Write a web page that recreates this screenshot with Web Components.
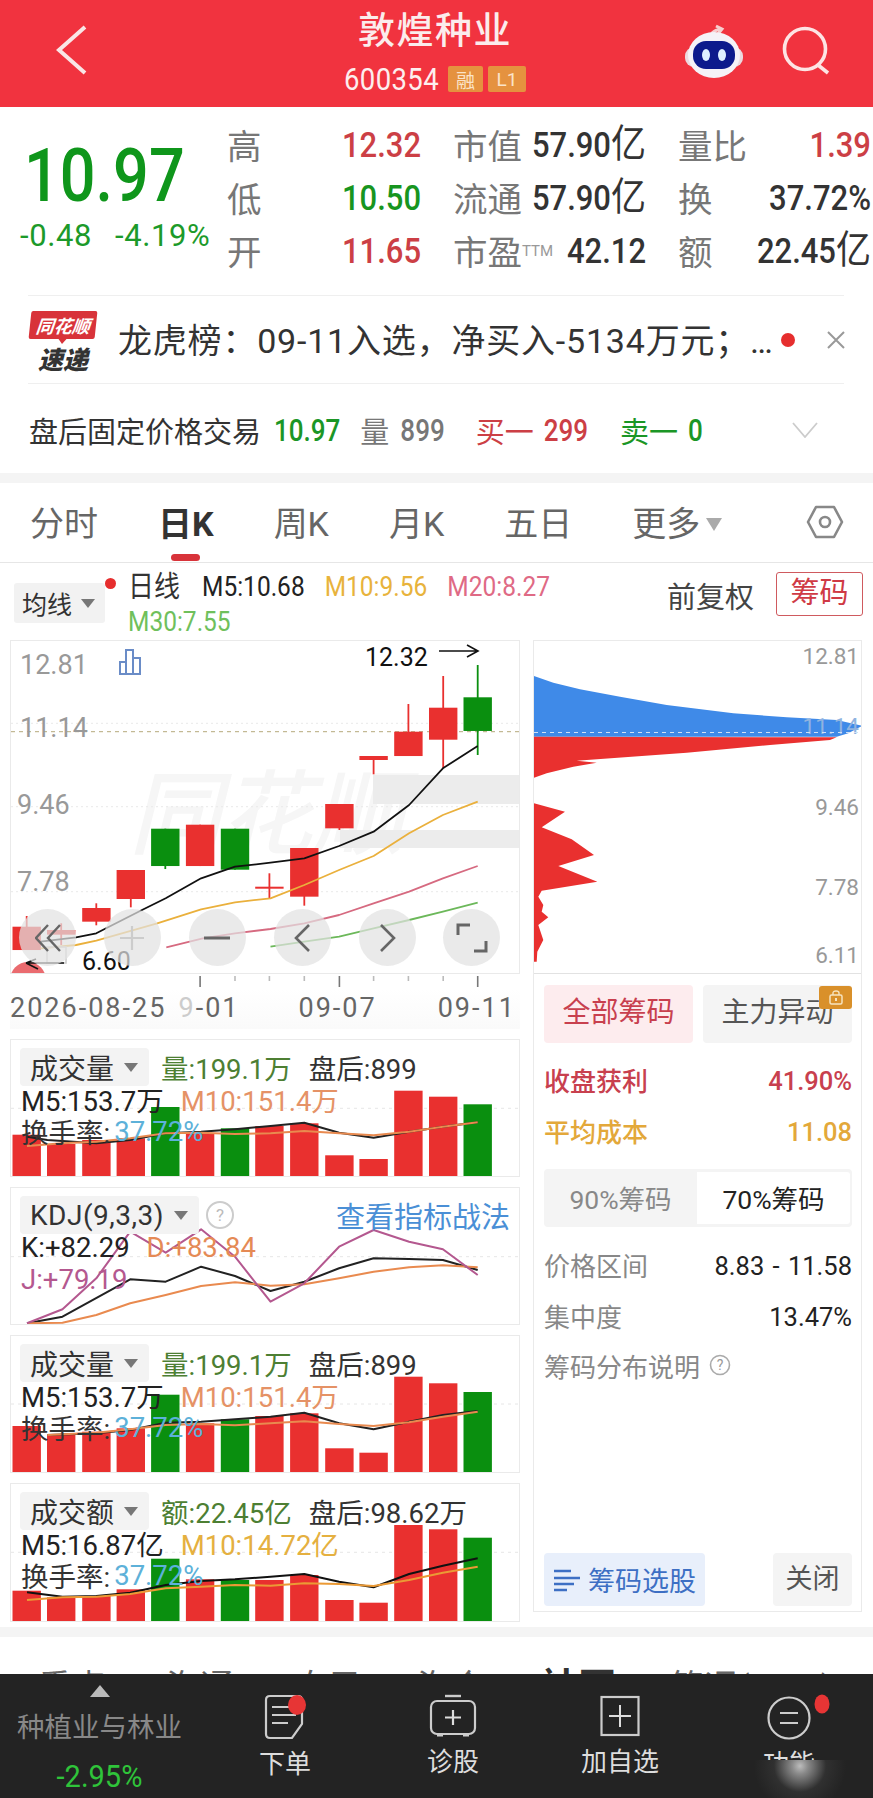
<!DOCTYPE html>
<html lang="zh">
<head>
<meta charset="utf-8">
<title>敦煌种业</title>
<style>
    html, body { margin: 0; padding: 0; background: #fff; }
    body {
        width: 873px;
        height: 1798px;
        overflow: hidden;
        color: #333;
        font-family: Roboto, "Noto Sans CJK SC", sans-serif;
    }
    .charts { display: flex; height: 987px; padding-left: 10px; box-sizing: border-box; }
    .left { width: 510px; display: flex; flex-direction: column; gap: 10px; flex: none; }
    .band { height: 10px; background: #f4f4f4; }
</style>
</head>
<body>
<stock-header></stock-header>
<quote-stats></quote-stats>
<news-row></news-row>
<after-row></after-row>
<div class="band"></div>
<period-tabs></period-tabs>
<legend-bar></legend-bar>
<div class="charts">
    <div class="left">
        <kline-chart></kline-chart>
        <chart-panel key="vol1">
            <span slot="name">成交量</span>
            <span slot="r1" style="color:#4d7f33">量:199.1万</span>
            <span slot="r1" style="color:#333">盘后:899</span>
            <span slot="r2" style="color:#222">M5:153.7万</span>
            <span slot="r2" style="color:#e59266">M10:151.4万</span>
            <span slot="r3" style="color:#333;margin-right:-14px">换手率:</span>
            <span slot="r3" style="color:#5db1d9">37.72%</span>
        </chart-panel>
        <chart-panel key="kdj">
            <span slot="name" style="letter-spacing:.5px">KDJ(9,3,3)</span>
            <svg slot="r1" width="30" height="30" viewBox="0 0 30 30" style="margin-left:-6px"><circle cx="15" cy="15" r="13" fill="none" stroke="#ccc" stroke-width="2"/><text x="15" y="21" text-anchor="middle" font-size="17" fill="#bbb">?</text></svg>
            <span slot="r1" style="color:#4a8fd6;font-size:29px;margin-left:auto;margin-right:9px">查看指标战法</span>
            <span slot="r2" style="color:#222">K:+82.29</span>
            <span slot="r2" style="color:#e58a55">D:+83.84</span>
            <span slot="r3" style="color:#b4588f">J:+79.19</span>
        </chart-panel>
        <chart-panel key="vol2">
            <span slot="name">成交量</span>
            <span slot="r1" style="color:#4d7f33">量:199.1万</span>
            <span slot="r1" style="color:#333">盘后:899</span>
            <span slot="r2" style="color:#222">M5:153.7万</span>
            <span slot="r2" style="color:#e59266">M10:151.4万</span>
            <span slot="r3" style="color:#333;margin-right:-14px">换手率:</span>
            <span slot="r3" style="color:#5db1d9">37.72%</span>
        </chart-panel>
        <chart-panel key="amt" style="height:139px">
            <span slot="name">成交额</span>
            <span slot="r1" style="color:#4d7f33">额:22.45亿</span>
            <span slot="r1" style="color:#333">盘后:98.62万</span>
            <span slot="r2" style="color:#222">M5:16.87亿</span>
            <span slot="r2" style="color:#e5b040">M10:14.72亿</span>
            <span slot="r3" style="color:#333;margin-right:-14px">换手率:</span>
            <span slot="r3" style="color:#5db1d9">37.72%</span>
        </chart-panel>
    </div>
    <chip-panel></chip-panel>
</div>
<div class="band"></div>
<info-tabs></info-tabs>
<bottom-nav></bottom-nav>

<script>
const RED = '#e9302f';
const GREEN = '#0a8f0f';
const BAR_X = [37, 139, 243, 345, 447, 550, 653, 755, 858, 962, 1063, 1166, 1269, 1371];

// chart data was read off crops, 2.958 wide and 3 high, so convert here
const px = x => (x / 2.958 - 11).toFixed(1);

function polyline(points, color, offset, width = 1.8) {
    const pts = points.map(p => `${px(p[0])},${(p[1] / 3 + offset).toFixed(1)}`).join(' ');
    return `<polyline points="${pts}" fill="none" stroke="${color}" stroke-width="${width}" stroke-linejoin="round"/>`;
}

function simple(tag, html) {
    customElements.define(tag, class extends HTMLElement {
        constructor() {
            super();
            this.attachShadow({ mode: 'open' });
            this.shadowRoot.innerHTML = html;
        }
    });
}

simple('stock-header', `
    <style>
        :host { display: flex; align-items: flex-start; height: 107px; background: #f1333f; color: #fff; position: relative; }
        .back { margin: 24px 0 0 56px; flex: none; }
        .mid { flex: none; width: 420px; display: flex; flex-direction: column; align-items: center; margin-left: 135px; }
        h1 { margin: 10px 0 0; font-size: 37px; line-height: 44px; font-weight: 500; letter-spacing: 1.5px; color: #fbecec; }
        .code { display: flex; align-items: center; margin-top: 12px; height: 26px; }
        .num { font-size: 27.5px; color: #fdeeee; display: inline-block; transform: scaleY(1.12); letter-spacing: .4px; margin-right: 9px; }
        .tag { display: flex; align-items: center; justify-content: center; height: 26px; background: #e5923f; color: #fbe3c8; font-size: 19px; border-radius: 2px; margin-left: 5px; }
        .rong { width: 35px; margin-left: 0; }
        .l1 { width: 38px; }
        .robot { position: absolute; left: 683px; top: 24px; }
        .search { position: absolute; left: 781px; top: 26px; }
    </style>
    <svg class="back" width="34" height="52" viewBox="0 0 34 52"><path d="M29 3 L3 26 L29 49" fill="none" stroke="#f9e6e6" stroke-width="4"/></svg>
    <div class="mid">
        <h1>敦煌种业</h1>
        <div class="code"><span class="num">600354</span><span class="tag rong">融</span><span class="tag l1">L1</span></div>
    </div>
    <svg class="robot" width="62" height="56" viewBox="0 0 62 56">
        <path d="M28 15 C27 9 32 6 38 5 M33 2 L39 5 L35 10" fill="none" stroke="#f7cfd0" stroke-width="3"/>
        <rect x="2" y="23" width="58" height="20" rx="9" fill="#ecd9df"/>
        <ellipse cx="31" cy="31" rx="26" ry="23" fill="#f5f2f7"/>
        <rect x="10" y="17" width="42" height="28" rx="13" fill="#0d1a8c"/>
        <ellipse cx="23" cy="31" rx="4" ry="6" fill="#dff0ff"/>
        <ellipse cx="39" cy="31" rx="4" ry="6" fill="#dff0ff"/>
    </svg>
    <svg class="search" width="50" height="50" viewBox="0 0 50 50"><circle cx="24" cy="23" r="20.5" fill="none" stroke="#fde4e4" stroke-width="3.6"/><path d="M37 39 L47 47" stroke="#fde4e4" stroke-width="3.6"/></svg>
`);

class StatCell extends HTMLElement {
    constructor() {
        super();
        this.attachShadow({ mode: 'open' });
        const color = this.getAttribute('color') || '#333';
        this.shadowRoot.innerHTML = `
            <style>
                :host { display: flex; justify-content: space-between; align-items: center; height: 53px; }
                .label { font-size: 34.5px; color: #777; white-space: nowrap; position: relative; top: -2px; }
                .val { font-size: 31px; line-height: 36px; font-weight: 500; display: inline-block; transform: scaleY(1.12); color: ${color}; white-space: nowrap; }
            </style>
            <span class="label"><slot name="label"></slot></span>
            <span class="val"><slot></slot></span>
        `;
    }
}
customElements.define('stat-cell', StatCell);

const YI = '<span style="font-size:35px;font-weight:400;line-height:0">亿</span>';

simple('quote-stats', `
    <style>
        :host { display: flex; height: 189px; box-sizing: border-box; padding-top: 12px; position: relative; }
        .price { width: 227px; flex: none; }
        .big { margin: 17px 0 0 24px; font-size: 63px; line-height: 80px; font-weight: 500; color: #0f961b; display: inline-block; transform: scaleY(1.18); }
        .sub { display: flex; gap: 23px; margin: 5px 0 0 20px; font-size: 31px; line-height: 30px; letter-spacing: .6px; color: #1c9a2a; white-space: nowrap; }
        .sub span { display: inline-block; }
        .col { display: flex; flex-direction: column; flex: none; }
        .a { width: 194px; margin-right: 32px; }
        .b { width: 193px; margin-right: 32px; }
        .c { width: 193px; margin-right: 0; }
        .line { position: absolute; left: 28px; right: 29px; bottom: 0; height: 1px; background: #efefef; }
    </style>
    <div class="price">
        <div class="big">10.97</div>
        <div class="sub"><span>-0.48</span><span>-4.19%</span></div>
    </div>
    <div class="col a">
        <stat-cell color="#cc3f45"><span slot="label">高</span>12.32</stat-cell>
        <stat-cell color="#17951f"><span slot="label">低</span>10.50</stat-cell>
        <stat-cell color="#cc3f45"><span slot="label">开</span>11.65</stat-cell>
    </div>
    <div class="col b">
        <stat-cell><span slot="label">市值</span>57.90${YI}</stat-cell>
        <stat-cell><span slot="label">流通</span>57.90${YI}</stat-cell>
        <stat-cell><span slot="label">市盈<sup style="font-size:15px;color:#999;vertical-align:9px;line-height:0">TTM</sup></span>42.12</stat-cell>
    </div>
    <div class="col c">
        <stat-cell color="#cc3f45"><span slot="label">量比</span>1.39</stat-cell>
        <stat-cell><span slot="label">换</span>37.72%</stat-cell>
        <stat-cell><span slot="label">额</span>22.45${YI}</stat-cell>
    </div>
    <div class="line"></div>
`);

simple('news-row', `
    <style>
        :host { display: flex; align-items: center; height: 88px; box-sizing: border-box; padding-left: 29px; position: relative; }
        .logo { width: 68px; flex: none; display: flex; flex-direction: column; align-items: center; margin-top: 3px; }
        .flag { position: relative; width: 66px; height: 28px; background: #d8333a; border-radius: 2px; transform: skewX(-6deg); color: #fff; font: italic 700 18px/28px "Noto Sans CJK SC", sans-serif; text-align: center; }
        .flag::after { content: ""; position: absolute; left: 30px; top: 28px; border: 4px solid transparent; border-top: 5px solid #d8333a; }
        .sd { font: italic 900 25px/28px "Noto Sans CJK SC", sans-serif; color: #333; margin-top: 5px; }
        .text { margin-left: 21px; font-size: 34px; letter-spacing: .8px; color: #333; white-space: nowrap; width: 660px; overflow: hidden; flex: none; position: relative; top: -2px; }
        .dot { position: absolute; left: 781px; top: 37px; width: 14px; height: 14px; background: #e62e2e; border-radius: 50%; }
        .x { margin-left: 49px; flex: none; }
        .line { position: absolute; left: 28px; right: 29px; bottom: 0; height: 1px; background: #efefef; }
    </style>
    <div class="logo"><div class="flag">同花顺</div><div class="sd">速递</div></div>
    <div class="text">龙虎榜：09-11入选，净买入-5134万元；…</div>
    <div class="dot"></div>
    <svg class="x" width="18" height="18" viewBox="0 0 18 18"><path d="M1 1 L17 17 M17 1 L1 17" stroke="#999" stroke-width="2"/></svg>
    <div class="line"></div>
`);

simple('after-row', `
    <style>
        :host { display: flex; align-items: center; height: 89px; box-sizing: border-box; padding: 3px 0 0 29px; font-size: 29px; white-space: nowrap; position: relative; }
        .t { color: #333; width: 232px; flex: none; }
        .g { color: #1b9626; }
        .r { color: #cc3f45; }
        .q { color: #777; }
        .n { font-size: 26px; font-weight: 500; display: inline-block; transform: scaleY(1.2); }
        svg { position: absolute; left: 792px; top: 38px; }
    </style>
    <span class="t">盘后固定价格交易</span>
    <span class="g n" style="margin-left:13px">10.97</span>
    <span class="q" style="margin-left:20px">量</span>
    <span class="q n" style="margin-left:11px">899</span>
    <span class="r" style="margin-left:31px">买一</span>
    <span class="r n" style="margin-left:10px">299</span>
    <span class="g" style="margin-left:32px">卖一</span>
    <span class="g n" style="margin-left:10px">0</span>
    <svg width="26" height="16" viewBox="0 0 26 16"><path d="M1 1 L13 15 L25 1" fill="none" stroke="#ccc" stroke-width="1.8"/></svg>
`);

simple('period-tabs', `
    <style>
        :host { display: flex; height: 80px; box-sizing: border-box; padding-left: 30px; gap: 60px; font-size: 34px; color: #666; border-bottom: 1px solid #e6e6e6; }
        .tab { display: flex; flex-direction: column; align-items: center; white-space: nowrap; }
        .tab b { line-height: 50px; margin-top: 16px; font-weight: 400; display: flex; align-items: center; }
        .on b { color: #333; font-weight: 700; }
        .on i { display: block; width: 29px; height: 7px; border-radius: 4px; background: #d8333a; margin-top: 5px; }
        .tri { width: 0; height: 0; border: 8px solid transparent; border-top: 13px solid #aaa; border-bottom: 0; margin-left: 6px; }
        svg { position: absolute; left: 806px; top: 505px; }
    </style>
    <div class="tab"><b>分时</b></div>
    <div class="tab on"><b>日K</b><i></i></div>
    <div class="tab"><b>周K</b></div>
    <div class="tab"><b>月K</b></div>
    <div class="tab"><b>五日</b></div>
    <div class="tab"><b>更多<span class="tri"></span></b></div>
    <svg width="38" height="34" viewBox="0 0 38 34"><path d="M10 2 H28 L36 17 L28 32 H10 L2 17 Z" fill="none" stroke="#888" stroke-width="2.6" stroke-linejoin="round"/><circle cx="19" cy="17" r="5" fill="none" stroke="#888" stroke-width="2.6"/></svg>
`);

simple('legend-bar', `
    <style>
        :host { display: flex; height: 77px; box-sizing: border-box; padding-left: 14px; position: relative; white-space: nowrap; }
        .sel { display: flex; align-items: center; width: 91px; height: 40px; margin-top: 20px; box-sizing: border-box; padding-left: 8px; background: #f2f2f2; border-radius: 3px; font-size: 25px; color: #333; flex: none; }
        .sel i { margin-left: 9px; border: 7px solid transparent; border-top: 9px solid #777; border-bottom: 0; }
        .dot { width: 11px; height: 11px; border-radius: 50%; background: #e62e2e; margin-top: 15px; flex: none; }
        .vals { display: flex; flex-wrap: wrap; width: 440px; column-gap: 20px; margin: 7px 0 0 12px; font-size: 24.5px; line-height: 34px; flex: none; }
        .vals span { display: inline-block; transform: scaleY(1.12); }
        .fq { margin-left: 99px; margin-top: 13px; font-size: 29px; line-height: 44px; color: #444; width: 87px; flex: none; }
        .cm { margin: 9px 0 0 22px; width: 87px; height: 44px; box-sizing: border-box; border: 1px solid #cf5a5f; border-radius: 3px; color: #cf3a45; font-size: 29px; line-height: 40px; text-align: center; flex: none; }
    </style>
    <div class="sel">均线<i></i></div>
    <div class="dot"></div>
    <div class="vals">
        <span style="color:#333;font-size:26px;margin-right:2px">日线</span>
        <span style="color:#222">M5:10.68</span>
        <span style="color:#e8b33c">M10:9.56</span>
        <span style="color:#df6a85">M20:8.27</span>
        <span style="color:#6fc05c">M30:7.55</span>
    </div>
    <div class="fq">前复权</div>
    <div class="cm">筹码</div>
`);

class KlineChart extends HTMLElement {
    constructor() {
        super();
        this.attachShadow({ mode: 'open' });
        // [left, top, bottom, wick top, wick bottom, colour]
        const candles = [
            [37, 890, 960, 858, 960, RED], [139, 900, 914, 880, 945, RED],
            [243, 834, 875, 820, 886, RED], [345, 720, 807, 720, 832, RED],
            [447, 596, 708, 596, 717, GREEN], [550, 584, 708, 584, 708, RED],
            [653, 596, 719, 596, 719, GREEN], [755, 770, 776, 730, 805, RED],
            [858, 654, 800, 654, 827, RED], [962, 522, 595, 522, 600, RED],
            [1063, 378, 390, 378, 433, RED], [1166, 305, 378, 222, 378, RED],
            [1269, 233, 329, 138, 415, RED], [1371, 202, 303, 105, 375, GREEN]
        ];
        const Y = y => (y / 3 - 11).toFixed(1);
        const body = candles.map(c => {
            const mid = (c[0] + 42);
            return `<rect x="${px(mid) - 0.9}" y="${Y(c[3])}" width="1.8" height="${(c[4] - c[3]) / 3}" fill="${c[5]}"/>` +
                `<rect x="${px(c[0])}" y="${Y(c[1])}" width="28.4" height="${(c[2] - c[1]) / 3}" fill="${c[5]}"/>`;
        }).join('');
        const label = (t, x, y, fill = '#999', size = 27) =>
            `<text x="${x}" y="${y}" font-size="${size}" fill="${fill}">${t}</text>`;
        const grid = [280, 530, 785].map(y =>
            `<line x1="0" x2="510" y1="${Y(y)}" y2="${Y(y)}" stroke="#e9e9e9" stroke-dasharray="2 3"/>`).join('');
        const ticks = BAR_X.slice(5).map((x, i) => {
            const big = [0, 4, 8].includes(i);
            return `<line x1="${+px(x + 42) + 1}" x2="${+px(x + 42) + 1}" y1="2" y2="${big ? 13 : 7}" stroke="${big ? '#777' : '#bbb'}" stroke-width="1.6"/>`;
        }).join('');
        this.shadowRoot.innerHTML = `
            <style>
                :host { display: block; height: 389px; position: relative; }
                .box { height: 334px; box-sizing: border-box; border: 1px solid #eaeaea; overflow: hidden; position: relative; }
                svg { display: block; }
                .btns { position: absolute; left: 8px; top: 268px; display: flex; gap: 27.9px; }
                .btn { width: 57px; height: 57px; border-radius: 50%; background: rgba(226,226,226,.72); display: flex; align-items: center; justify-content: center; }
                .ticks { height: 15px; }
                .dates { display: flex; font-size: 27px; line-height: 36px; letter-spacing: 2px; color: #666; height: 40px; box-sizing: border-box; background: linear-gradient(#fff, #fafafa); white-space: nowrap; padding-top: 1px; }
            </style>
            <div class="box">
                <svg width="508" height="332" viewBox="0 0 508 332">
                    <text x="118" y="206" font-size="92" font-style="italic" font-weight="500" fill="#f6f6f6" textLength="275">同花顺</text>
                    <rect x="362" y="134" width="150" height="29" fill="#ececec"/>
                    <rect x="329" y="189" width="183" height="18" fill="#ececec"/>
                    ${grid}
                    <line x1="0" x2="510" y1="${Y(305)}" y2="${Y(305)}" stroke="#b5a97c" stroke-dasharray="4 4"/>
                    ${label('12.81', 9, 33)}${label('11.14', 9, 96)}${label('9.46', 6, 173)}${label('7.78', 6, 250)}
                    <g fill="none" stroke="#6a8cc7" stroke-width="2"><rect x="109" y="21" width="6" height="12"/><rect x="115" y="9" width="7" height="24"/><rect x="122" y="17" width="7" height="16"/></g>
                    ${body}
                    ${polyline([[120,935],[225,922],[285,910],[420,840],[490,805],[595,745],[695,710],[800,698],[900,685],[1003,648],[1105,605],[1210,525],[1310,415],[1413,348]], '#111', -11)}
                    ${polyline([[120,955],[225,945],[285,932],[465,880],[595,838],[695,817],[800,805],[900,765],[1003,720],[1105,678],[1210,610],[1310,555],[1413,515]], '#eab03c', -11)}
                    ${polyline([[492,952],[600,925],[695,910],[800,897],[900,880],[1003,855],[1105,820],[1210,785],[1310,745],[1413,708]], '#d66a80', -11)}
                    ${polyline([[800,950],[900,935],[1003,920],[1105,895],[1210,870],[1310,845],[1413,818]], '#6cb85a', -11)}
                    ${label('12.32', 354, 25, '#111', 25)}
                    <path d="M428 10 H467 M456 4 L467 10 L456 16" fill="none" stroke="#111" stroke-width="1.6"/>
                    <circle cx="17" cy="339" r="18" fill="#ea6b6f"/>
                    <rect x="36" y="306" width="19" height="16" fill="none" stroke="#ccc" stroke-width="1.6"/>
                    <path d="M15 322 H53 M15 322 L25 318 M15 322 L27 328" fill="none" stroke="#111" stroke-width="1.6"/>
                    ${label('6.60', 71, 329, '#111', 25)}
                </svg>
                <div class="btns">
                    <div class="btn"><svg width="26" height="28" viewBox="0 0 26 28"><path d="M13 1 L1 14 L13 27 M25 1 L13 14 L25 27" fill="none" stroke="#666" stroke-width="2.4"/></svg></div>
                    <div class="btn"><svg width="24" height="24" viewBox="0 0 24 24"><path d="M12 0 V24 M0 12 H24" stroke="#ccc" stroke-width="2.2"/></svg></div>
                    <div class="btn"><svg width="26" height="4" viewBox="0 0 26 4"><path d="M0 2 H26" stroke="#666" stroke-width="3"/></svg></div>
                    <div class="btn"><svg width="17" height="28" viewBox="0 0 17 28"><path d="M15 1 L2 14 L15 27" fill="none" stroke="#666" stroke-width="2.6"/></svg></div>
                    <div class="btn"><svg width="17" height="28" viewBox="0 0 17 28"><path d="M2 1 L15 14 L2 27" fill="none" stroke="#666" stroke-width="2.6"/></svg></div>
                    <div class="btn"><svg width="32" height="30" viewBox="0 0 32 30"><path d="M2 12 V2 H14 M30 18 V28 H18" fill="none" stroke="#666" stroke-width="3"/></svg></div>
                </div>
            </div>
            <svg class="ticks" width="510" height="15">${ticks}</svg>
            <div class="dates">
                <span>2026-08-25</span>
                <span style="margin-left:-5px"><span style="color:transparent">0</span><span style="color:#ccc">9</span>-01</span>
                <span style="margin-left:59px">09-07</span>
                <span style="margin-left:61px">09-11</span>
            </div>
        `;
    }
}
customElements.define('kline-chart', KlineChart);

const PANELS = {
    vol1: {
        offset: -10, grid: 235, bottom: 441,
        tops: [314, 342, 330, 325, 231, 310, 295, 288, 280, 376, 387, 182, 200, 223],
        lines: [
            ['#222', [[80,320],[140,330],[285,340],[385,330],[490,310],[595,305],[695,298],[800,288],[900,278],[1003,308],[1105,323],[1210,305],[1310,290],[1413,277]]],
            ['#e98a4f', [[80,348],[185,340],[285,335],[385,325],[490,310],[595,308],[695,312],[800,310],[900,303],[1003,310],[1105,316],[1210,305],[1310,290],[1413,277]]]
        ]
    },
    kdj: {
        offset: -158, grid: 680,
        lines: [
            ['#222', [[80,880],[185,860],[385,748],[490,755],[595,710],[695,738],[800,783],[900,755],[1003,715],[1105,685],[1210,687],[1310,690],[1413,720]]],
            ['#e98a4f', [[80,880],[185,878],[285,855],[385,820],[490,795],[595,768],[695,757],[800,767],[900,763],[1003,745],[1105,725],[1210,712],[1310,706],[1413,712]]],
            ['#b4588f', [[80,880],[185,838],[285,745],[385,605],[490,668],[595,598],[695,680],[800,815],[900,760],[1003,650],[1105,600],[1210,635],[1310,658],[1413,735]]]
        ]
    },
    vol2: {
        offset: -16, grid: 252, bottom: 460,
        tops: [318, 345, 335, 325, 224, 310, 298, 288, 280, 385, 398, 170, 190, 216],
        lines: [
            ['#222', [[140,345],[285,340],[385,330],[490,308],[595,305],[695,298],[800,290],[900,278],[1003,310],[1105,328],[1210,305],[1310,285],[1413,273]]],
            ['#e98a4f', [[140,345],[285,338],[385,328],[490,315],[595,312],[695,316],[800,310],[900,304],[1003,312],[1105,318],[1210,307],[1310,290],[1413,275]]]
        ]
    },
    amt: {
        offset: -164, grid: 697, bottom: 905,
        tops: [812, 832, 828, 808, 716, 778, 780, 780, 765, 840, 848, 615, 628, 653],
        lines: [
            ['#111', [[80,817],[185,830],[285,828],[385,818],[490,795],[595,783],[695,778],[800,770],[900,762],[1003,785],[1105,802],[1210,762],[1310,737],[1413,715]]],
            ['#eb9a35', [[80,840],[185,832],[285,830],[385,822],[490,805],[595,800],[695,795],[800,797],[900,790],[1003,792],[1105,798],[1210,780],[1310,758],[1413,740]]]
        ]
    }
};

class ChartPanel extends HTMLElement {
    constructor() {
        super();
        this.attachShadow({ mode: 'open' });
    }

    connectedCallback() {
        const d = PANELS[this.getAttribute('key')];
        const bars = (d.tops || []).map((t, i) => {
            const c = [4, 6, 13].includes(i) ? GREEN : RED;
            return `<rect x="${px(BAR_X[i])}" y="${(t / 3 + d.offset).toFixed(1)}" width="28.4" height="${(d.bottom - t) / 3}" fill="${c}"/>`;
        }).join('');
        const gy = (d.grid / 3 + d.offset).toFixed(1);
        const lines = d.lines.map(l => polyline(l[1], l[0], d.offset, 2)).join('');
        this.shadowRoot.innerHTML = `
            <style>
                :host { display: block; height: 138px; box-sizing: border-box; border: 1px solid #eaeaea; position: relative; overflow: hidden; font-size: 27.5px; white-space: nowrap; }
                svg.bg { position: absolute; left: 0; top: 0; }
                .rows { position: relative; padding: 11px 0 0 10px; }
                .row { display: flex; align-items: center; height: 32px; gap: 17px; }
                .sel { display: flex; align-items: center; gap: 10px; height: 38px; box-sizing: border-box; padding: 0 11px 0 10px; margin: 0 -5px 0 -1px; background: #f3f3f3; border-radius: 4px; font-size: 28px; color: #333; }
                .sel i { border: 7px solid transparent; border-top: 9px solid #777; border-bottom: 0; }
            </style>
            <svg class="bg" width="508" height="137">
                <line x1="0" x2="510" y1="${gy}" y2="${gy}" stroke="#e6e6e6" stroke-dasharray="3 4"/>
                ${bars}${lines}
            </svg>
            <div class="rows">
                <div class="row"><div class="sel"><slot name="name"></slot><i></i></div><slot name="r1"></slot></div>
                <div class="row"><slot name="r2"></slot></div>
                <div class="row" style="gap:18px"><slot name="r3"></slot></div>
            </div>
        `;
    }
}
customElements.define('chart-panel', ChartPanel);

class InfoLine extends HTMLElement {
    constructor() {
        super();
        this.attachShadow({ mode: 'open' });
        const a = this.getAttribute('a') || '#888';
        const b = this.getAttribute('b') || '#222';
        this.shadowRoot.innerHTML = `
            <style>
                :host { display: flex; justify-content: space-between; align-items: center; height: 42px; font-size: 26px; white-space: nowrap; }
                .l { color: ${a}; position: relative; top: -2px; }
                .r { color: ${b}; font-size: 25.5px; }
            </style>
            <span class="l"><slot name="l"></slot></span>
            <span class="r"><slot></slot></span>
        `;
    }
}
customElements.define('info-line', InfoLine);

class ChipPanel extends HTMLElement {
    constructor() {
        super();
        this.attachShadow({ mode: 'open' });
        const P = pts => pts.map(p => `${(p[0] / 3 - 14).toFixed(1)},${(p[1] / 3 - 11).toFixed(1)}`).join(' ');
        const blue = P([[42,138],[100,158],[180,178],[300,200],[440,225],[640,250],[800,262],[950,270],[1027,287],[985,310],[950,320],[42,320]]);
        const red1 = P([[42,320],[950,322],[930,330],[750,345],[500,368],[200,390],[170,392],[230,398],[160,410],[80,430],[42,443]]);
        const red2 = P([[42,520],[135,545],[65,592],[155,628],[222,675],[115,708],[232,755],[65,782],[55,800],[70,825],[65,845],[85,862],[55,885],[70,930],[52,965],[50,995],[42,995]]);
        const tick = (t, y) => `<text x="325" y="${y}" font-size="22.5" fill="#999" text-anchor="end">${t}</text>`;
        this.shadowRoot.innerHTML = `
            <style>
                :host { display: flex; flex-direction: column; width: 329px; height: 972px; box-sizing: border-box; margin-left: 13px; border: 1px solid #eaeaea; padding: 0 9px 5px 10px; flex: none; white-space: nowrap; }
                svg.c { display: block; margin: 0 -9px 0 -10px; border-bottom: 1px solid #e2e2e2; flex: none; }
                .tabs { display: flex; gap: 10px; margin-top: 11px; }
                .tab { width: 149px; height: 58px; border-radius: 4px; background: #f4f4f4; color: #555; font-size: 28px; line-height: 56px; text-align: center; position: relative; }
                .tab.on { background: #fdecee; color: #c8404e; }
                .lock { position: absolute; right: 0; top: 1px; width: 33px; height: 23px; background: #d9902a; border-radius: 3px; display: flex; align-items: center; justify-content: center; }
                .toggle { display: flex; height: 58px; margin-top: 16px; background: #f4f4f4; border-radius: 4px; font-size: 26.5px; }
                .toggle div { flex: 1; display: flex; align-items: center; justify-content: center; color: #888; padding-bottom: 2px; box-sizing: border-box; }
                .toggle .on { background: #fff; color: #222; margin: 3px 2px 3px 0; border-radius: 0 3px 3px 0; }
                .buttons { display: flex; justify-content: space-between; margin-top: auto; font-size: 27px; }
                .pick { display: flex; align-items: center; gap: 8px; width: 161px; height: 53px; box-sizing: border-box; padding-left: 10px; background: #e8effb; color: #3d6fc4; border-radius: 4px; }
                .close { width: 79px; height: 53px; background: #f4f4f4; color: #555; border-radius: 4px; text-align: center; line-height: 53px; }
            </style>
            <svg class="c" width="327" height="332" viewBox="0 0 327 332">
                ${tick('12.81', 23)}${tick('9.46', 174)}${tick('7.78', 254)}${tick('6.11', 322)}
                <polygon points="${blue}" fill="#3f8ae8"/>
                <polygon points="${red1}" fill="#e9302f"/>
                <polygon points="${red2}" fill="#e9302f"/>
                <text x="325" y="93" font-size="22.5" fill="#8fb3e0" text-anchor="end">11.14</text>
                <line x1="0" x2="327" y1="91.5" y2="91.5" stroke="#cfe0f5" stroke-dasharray="4 4"/>
            </svg>
            <div class="tabs">
                <div class="tab on">全部筹码</div>
                <div class="tab">主力异动<span class="lock"><svg width="16" height="16" viewBox="0 0 16 16"><path d="M5 5 V3 Q5 1 8 1 Q11 1 11 3 V5" fill="none" stroke="#f6e3c0" stroke-width="1.4"/><rect x="2" y="5" width="12" height="9" rx="1.5" fill="none" stroke="#f6e3c0" stroke-width="1.5"/><rect x="7" y="8" width="2" height="3" fill="#f6e3c0"/></svg></span></div>
            </div>
            <info-line a="#c8404e" b="#c8404e" style="margin-top:17px;font-weight:500"><span slot="l">收盘获利</span>41.90%</info-line>
            <info-line a="#e3a83a" b="#e3a83a" style="margin-top:9px;font-weight:500"><span slot="l">平均成本</span>11.08</info-line>
            <div class="toggle"><div>90%筹码</div><div class="on">70%筹码</div></div>
            <info-line style="margin-top:18px"><span slot="l">价格区间</span><span style="word-spacing:2px">8.83 - 11.58</span></info-line>
            <info-line style="margin-top:9px"><span slot="l">集中度</span>13.47%</info-line>
            <info-line style="margin-top:8px"><span slot="l" style="display:inline-flex;align-items:center;gap:9px">筹码分布说明<svg width="22" height="22" viewBox="0 0 22 22"><circle cx="11" cy="11" r="9.5" fill="none" stroke="#aaa" stroke-width="1.6"/><text x="11" y="16" font-size="14" text-anchor="middle" fill="#999">?</text></svg></span></info-line>
            <div class="buttons">
                <div class="pick"><svg width="26" height="24" viewBox="0 0 26 24"><path d="M0 3 H17 M0 10 H26 M0 16 H20 M0 22 H13" stroke="#3d6fc4" stroke-width="2.6"/></svg>筹码选股</div>
                <div class="close">关闭</div>
            </div>
        `;
    }
}
customElements.define('chip-panel', ChipPanel);

simple('info-tabs', `
    <style>
        :host { display: flex; height: 37px; overflow: hidden; box-sizing: border-box; padding-top: 27px; font-size: 34px; line-height: 46px; color: #666; white-space: nowrap; }
        span { flex: none; }
    </style>
    <span style="margin-left:38px">重点</span>
    <span style="margin-left:60px">海通</span>
    <span style="margin-left:60px">自己</span>
    <span style="margin-left:55px">海合</span>
    <span style="margin-left:55px;font-weight:700;font-size:38px;color:#333;line-height:46px">社区</span>
    <span style="margin-left:54px">简况(2/12)</span>
`);

simple('bottom-nav', `
    <style>
        :host { display: grid; grid-template-columns: 199px 172px 164px 170px 168px; height: 124px; background: #232323; position: relative; overflow: hidden; color: #ddd; font-size: 26px; white-space: nowrap; }
        .item { display: flex; flex-direction: column; align-items: center; padding-top: 20px; position: relative; }
        .item svg { display: block; flex: none; }
        .item span { line-height: 30px; margin-top: 9px; }
        .sector { display: flex; flex-direction: column; align-items: center; padding-top: 11px; }
        .up { border: 10px solid transparent; border-bottom: 12px solid #bbb; border-top: 0; }
        .name { font-size: 27.5px; color: #888; line-height: 36px; margin-top: 13px; }
        .pct { font-size: 29px; color: #2fc43a; line-height: 30px; margin-top: 15px; display: inline-block; transform: scaleY(1.1); }
        .mark { position: absolute; left: 690px; top: 86px; width: 183px; height: 38px; background: radial-gradient(circle at 110px 6px, #bdbdbd 0, #8a8a8a 8px, #303030 26px, #232323 46px); }
    </style>
    <div class="sector"><i class="up"></i><div class="name">种植业与林业</div><div class="pct">-2.95%</div></div>
    <div class="item">
        <svg width="46" height="46" viewBox="0 0 46 46"><path d="M8 2 H36 Q40 2 40 6 V30 L30 44 H8 Q4 44 4 40 V6 Q4 2 8 2 Z" fill="none" stroke="#ccc" stroke-width="2.2"/><path d="M10 13 H30 M10 21 H34 M10 29 H26" stroke="#ccc" stroke-width="2"/><ellipse cx="35" cy="11" rx="9" ry="10" fill="#e73535"/></svg>
        <span>下单</span>
    </div>
    <div class="item">
        <svg width="48" height="44" viewBox="0 0 48 44"><path d="M16 2 H32" stroke="#ccc" stroke-width="2.4"/><rect x="2" y="7" width="44" height="33" rx="6" fill="none" stroke="#ccc" stroke-width="2.2"/><path d="M8 41 H14 M34 41 H40" stroke="#ccc" stroke-width="3"/><path d="M24 16 V31 M16 23.5 H32" stroke="#ddd" stroke-width="2.2"/></svg>
        <span>诊股</span>
    </div>
    <div class="item">
        <svg width="40" height="44" viewBox="0 0 40 44"><rect x="1.5" y="3" width="37" height="38" fill="none" stroke="#ccc" stroke-width="2.2"/><path d="M20 11 V33 M9 22 H31" stroke="#ddd" stroke-width="2"/></svg>
        <span>加自选</span>
    </div>
    <div class="item">
        <svg width="66" height="46" viewBox="0 0 66 46" style="margin-left:20px"><circle cx="23" cy="24" r="20.5" fill="none" stroke="#ccc" stroke-width="2.2"/><path d="M14 19 H32 M14 29 H32" stroke="#ccc" stroke-width="2.2"/><ellipse cx="56" cy="10" rx="7.5" ry="9.5" fill="#e73535"/></svg>
        <span>功能</span>
    </div>
    <div class="mark"></div>
`);
</script>
</body>
</html>
